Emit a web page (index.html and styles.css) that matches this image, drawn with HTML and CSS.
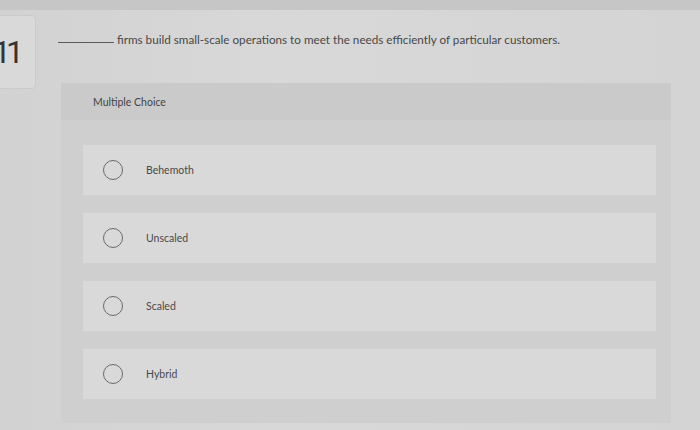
FILE: index.html
```html
<!DOCTYPE html>
<html lang="en">
<head>
    <meta charset="UTF-8">
    <meta name="viewport" content="width=device-width, initial-scale=1.0">
    <title>Question 11</title>
    <link rel="stylesheet" href="styles.css">
</head>
<body>
    <div class="topbar"></div>
    <div class="main">
        <div class="num-box">11</div>
        <div class="content">
            <div class="question">
                <span class="blank"></span>
                <span>firms build small-scale operations to meet the needs efficiently of particular customers.</span>
            </div>

            <div class="panel">
                <div class="panel-head">Multiple Choice</div>
                <div class="options">
                    <div class="option"><span class="radio"></span><span class="label">Behemoth</span></div>
                    <div class="option"><span class="radio"></span><span class="label">Unscaled</span></div>
                    <div class="option"><span class="radio"></span><span class="label">Scaled</span></div>
                    <div class="option"><span class="radio"></span><span class="label">Hybrid</span></div>
                </div>
            </div>
        </div>
    </div>
</body>
</html>
```

FILE: styles.css
```css
body {
    margin: 0;
    width: 700px;
    height: 430px;
    overflow: hidden;
    font-family: Lato, "Open Sans", sans-serif;
    color: #4a4a4a;
    background: linear-gradient(90deg, #d2d2d2, #d8d8d8 40%, #d4d4d4);
}
.topbar {
    height: 10px;
    background: #c6c6c6;
}
.main {
    display: flex;
}
.num-box {
    flex: none;
    width: 40px;
    height: 72px;
    margin-left: -22px;
    margin-top: 5px;
    padding-right: 16px;
    border: 1px solid #cbcbcb;
    border-radius: 4px;
    background: #d9d9d9;
    font-family: Roboto, sans-serif;
    font-size: 32px;
    letter-spacing: -5px;
    line-height: 72px;
    text-align: right;
    color: #333;
}
.content {
    margin-left: 22px;
    padding-top: 22px;
    flex: 1;
}
.question {
    display: flex;
    align-items: center;
    height: 14px;
    font-size: 11.7px;
    color: #474747;
}
.blank {
    display: inline-block;
    width: 56px;
    height: 1px;
    margin-top: 6px;
    margin-right: 3px;
    background: #5a5a5a;
}
.panel {
    margin-top: 37px;
    margin-left: 3px;
    width: 610px;
    height: 340px;
    background: #cfcfcf;
}
.panel-head {
    height: 37px;
    padding-left: 32px;
    display: flex;
    align-items: center;
    font-size: 10.5px;
    color: #444;
    background: #cacaca;
}
.options {
    padding: 25px 15px 0 22px;
    display: flex;
    flex-direction: column;
    gap: 18px;
}
.option {
    height: 50px;
    display: flex;
    align-items: center;
    padding-left: 20px;
    background: #d9d9d9;
}
.radio {
    width: 18px;
    height: 18px;
    border: 1.5px solid #6a6a70;
    border-radius: 50%;
}
.label {
    margin-left: 23px;
    font-size: 10.5px;
    color: #4a4a4a;
}
```
